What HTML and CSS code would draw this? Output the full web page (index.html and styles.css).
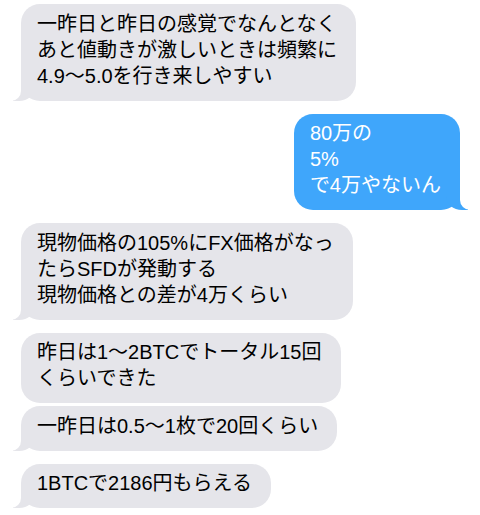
FILE: index.html
```html
<!DOCTYPE html>
<html lang="ja">
<head>
<meta charset="utf-8">
<link rel="stylesheet" href="styles.css">
</head>
<body>
<div class="thread">
  <div class="bubble recv tail">一昨日と昨日の感覚でなんとなく<br>あと値動きが激しいときは頻繁に<br>4.9〜5.0を行き来しやすい</div>
  <div class="bubble sent tail">80万の<br>5%<br>で4万やないん</div>
  <div class="bubble recv tail">現物価格の105%にFX価格がなっ<br>たらSFDが発動する<br>現物価格との差が4万くらい</div>
  <div class="bubble recv close">昨日は1〜2BTCでトータル15回<br>くらいできた</div>
  <div class="bubble recv tail">一昨日は0.5〜1枚で20回くらい</div>
  <div class="bubble recv tail">1BTCで2186円もらえる</div>
</div>
</body>
</html>
```
FILE: styles.css
```css
html, body {
  margin: 0;
  padding: 0;
  background: #ffffff;
}
.thread {
  display: flex;
  flex-direction: column;
  gap: 13px;
  padding: 4px 20px 0 21px;
  font-family: "Liberation Sans", "Noto Sans CJK JP", sans-serif;
  font-size: 20px;
  line-height: 26px;
  color: #000;
}
.bubble {
  position: relative;
  padding: 6.5px 19px 12px 16px;
  border-radius: 19px;
  width: fit-content;
  white-space: nowrap;
}
.bubble.close {
  margin-bottom: -10px;
}
.recv {
  align-self: flex-start;
  background: #e5e5ea;
}
.sent {
  align-self: flex-end;
  background: #3fa6fb;
  color: #fff;
}
.recv.tail::before {
  content: "";
  position: absolute;
  left: -8px;
  bottom: 0;
  width: 22px;
  height: 22px;
  background: #e5e5ea;
  border-bottom-right-radius: 16px 14px;
}
.recv.tail::after {
  content: "";
  position: absolute;
  left: -26px;
  bottom: 0;
  width: 26px;
  height: 22px;
  background: #ffffff;
  border-bottom-right-radius: 10px;
}
.sent.tail::before {
  content: "";
  position: absolute;
  right: -8px;
  bottom: 0;
  width: 22px;
  height: 22px;
  background: #3fa6fb;
  border-bottom-left-radius: 16px 14px;
}
.sent.tail::after {
  content: "";
  position: absolute;
  right: -26px;
  bottom: 0;
  width: 26px;
  height: 22px;
  background: #ffffff;
  border-bottom-left-radius: 10px;
}
```
